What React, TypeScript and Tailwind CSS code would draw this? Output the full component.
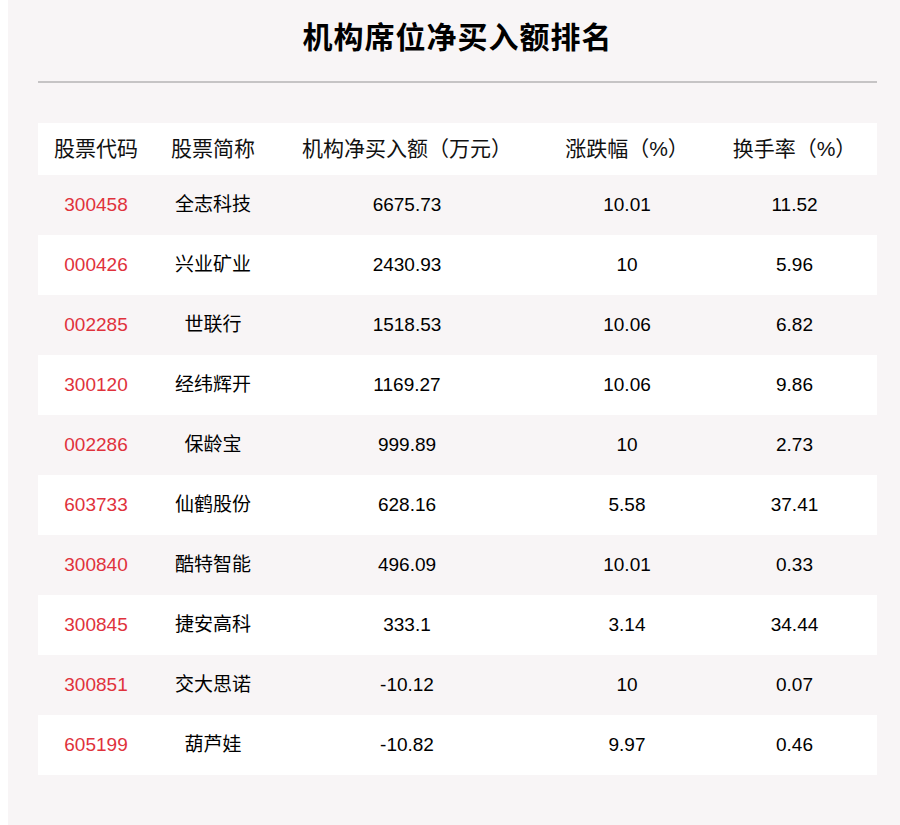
const rows = [
  { code: "300458", name: "全志科技", net: "6675.73", chg: "10.01", turn: "11.52" },
  { code: "000426", name: "兴业矿业", net: "2430.93", chg: "10", turn: "5.96" },
  { code: "002285", name: "世联行", net: "1518.53", chg: "10.06", turn: "6.82" },
  { code: "300120", name: "经纬辉开", net: "1169.27", chg: "10.06", turn: "9.86" },
  { code: "002286", name: "保龄宝", net: "999.89", chg: "10", turn: "2.73" },
  { code: "603733", name: "仙鹤股份", net: "628.16", chg: "5.58", turn: "37.41" },
  { code: "300840", name: "酷特智能", net: "496.09", chg: "10.01", turn: "0.33" },
  { code: "300845", name: "捷安高科", net: "333.1", chg: "3.14", turn: "34.44" },
  { code: "300851", name: "交大思诺", net: "-10.12", chg: "10", turn: "0.07" },
  { code: "605199", name: "葫芦娃", net: "-10.82", chg: "9.97", turn: "0.46" },
];

const cols = "grid grid-cols-[116px_118px_270px_170px_165px]";

export default function App() {
  return (
    <div className="w-[900px] h-[825px] bg-white pl-2 font-['Liberation_Sans','Noto_Sans_CJK_SC',sans-serif]">
      <div className="h-full bg-[#f8f5f6] px-[30px] pr-[23px]">
        <h1 className="pt-[18px] h-[81px] text-center text-[30px] font-bold leading-[40px] text-black tracking-[1px]">
          机构席位净买入额排名
        </h1>
        <div className="h-[2px] bg-[#c6c4c5]" />
        <div className="mt-[40px] w-[839px]">
          <div className={`${cols} h-[52px] items-center bg-white text-[21px] text-[#111] text-center`}>
            <div>股票代码</div>
            <div>股票简称</div>
            <div>机构净买入额（万元）</div>
            <div>涨跌幅（%）</div>
            <div>换手率（%）</div>
          </div>
          {rows.map((r, i) => (
            <div
              key={r.code}
              className={`${cols} h-[60px] items-center text-[19px] text-center text-black ${i % 2 === 1 ? "bg-white" : ""}`}
            >
              <div className="text-[#e0323c]">{r.code}</div>
              <div>{r.name}</div>
              <div>{r.net}</div>
              <div>{r.chg}</div>
              <div>{r.turn}</div>
            </div>
          ))}
        </div>
      </div>
    </div>
  );
}
